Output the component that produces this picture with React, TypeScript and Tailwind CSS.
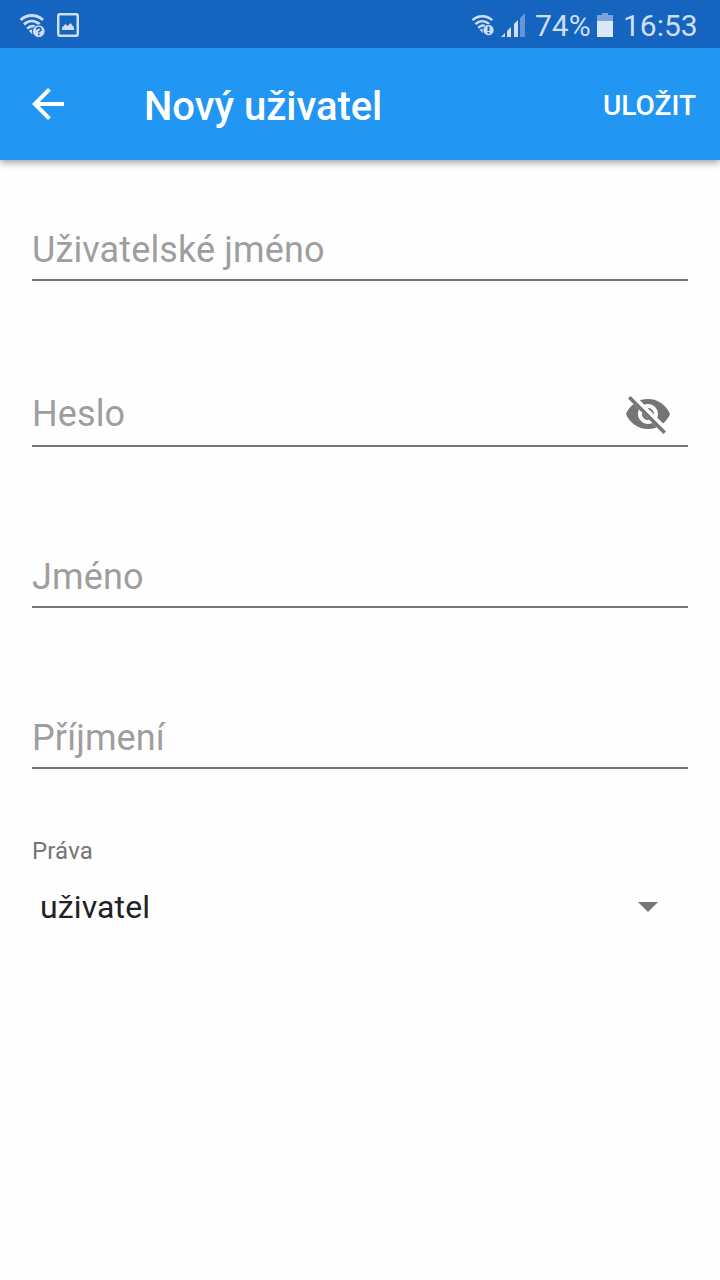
import React from 'react';

function StatusWifi({ mark }: { mark: '?' | '!' }) {
  return (
    <svg width="26" height="26" viewBox="0 0 26 26" fill="none" stroke="#cfdef3">
      <path d="M1.6 7C8 1 17.6 1 24 7" strokeWidth="2.8" />
      <path d="M5 11.4C9.8 7 15.8 7 20.6 11.4" strokeWidth="2.8" />
      <path d="M8.2 15.6C11 12.8 14 12.6 16.4 14" strokeWidth="2.7" />
      <path d="M10 18L13.4 21.4V16.6C11.8 16.4 10.8 17.2 10 18Z" fill="#cfdef3" stroke="none" />
      <circle cx="19.8" cy="18.2" r="6.3" fill="#cfdef3" stroke="#1565c0" strokeWidth="1" />
      {mark === '?' ? (
        <path d="M17.6 16.8C17.6 13.9 22 13.9 22 16.5C22 18.1 19.8 17.9 19.8 19.6M19.8 20.6V22.2" stroke="#1565c0" strokeWidth="1.6" />
      ) : (
        <path d="M19.8 14.2V19.2M19.8 20.4V22.2" stroke="#1565c0" strokeWidth="2.2" />
      )}
    </svg>
  );
}

function StatusBar() {
  return (
    <div className="relative z-10 flex h-12 items-start justify-between bg-[#1565c0] pl-[19px] pr-[22px] text-[#cfdef3]">
      <div className="flex pt-[13px]">
        <StatusWifi mark="?" />
        <svg className="ml-3" width="22" height="24" viewBox="0 0 22 24">
          <rect x="1.25" y="1.25" width="19.5" height="21.5" rx="1.5" fill="none" stroke="#cfdef3" strokeWidth="2.5" />
          <path d="M5 17V14.5L8.5 11L10.5 13L13.5 10L17 14.5V17Z" fill="#cfdef3" />
        </svg>
      </div>
      <div className="flex">
        <div className="mt-[14px] flex h-6 w-6 [&>svg]:h-[23px] [&>svg]:w-[23px]">
          <StatusWifi mark="!" />
        </div>
        <svg className="ml-[6px] mt-[13px]" width="24" height="24" viewBox="0 0 24 24">
          <path d="M0 24L4 20V24ZM6 24V18L10 14V24ZM13 24V11L17 7V24Z" fill="#cfdef3" />
          <path d="M19 24V5L24 0V24Z" fill="#6396d6" />
        </svg>
        <span className="ml-[10px] mt-2 w-[56px] whitespace-nowrap text-[30px] leading-9">74%</span>
        <svg className="ml-[6px] mt-[13px]" width="16" height="24" viewBox="0 0 16 24">
          <path d="M0 2H5V0H11V2H16V8H0Z" fill="#78a5dc" />
          <path d="M0 8H16V24H0Z" fill="#dce9f5" />
        </svg>
        <span className="ml-[10px] mt-2 w-[75px] whitespace-nowrap text-[30px] leading-9">16:53</span>
      </div>
    </div>
  );
}

function VisibilityOff() {
  return (
    <svg width="48" height="48" viewBox="0 0 24 24">
      <defs>
        <mask id="slash">
          <path d="M0 0H24V24H0Z" fill="#fff" />
          <path d="M2 4.27L19.73 22L22.27 19.46L4.54 1.73Z" fill="#000" />
        </mask>
      </defs>
      <path mask="url(#slash)" fill="#757575" fillRule="evenodd" d="M12 4.5C7 4.5 2.73 7.61 1 12c1.73 4.39 6 7.5 11 7.5s9.27-3.11 11-7.5c-1.73-4.39-6-7.5-11-7.5zM12 17c-2.76 0-5-2.24-5-5s2.24-5 5-5 5 2.24 5 5-2.24 5-5 5zM12 9c-1.66 0-3 1.34-3 3s1.34 3 3 3 3-1.34 3-3-1.34-3-3-3z" />
      <path d="M2 4.27L3.27 3L21 20.73L19.73 22Z" fill="#757575" />
    </svg>
  );
}

function Field({ label, className, children }: { label: string; className: string; children?: React.ReactNode }) {
  return (
    <div className={`flex items-end justify-between border-b-2 border-[#757575] text-4xl leading-[42px] tracking-[0.12px] text-[#9e9e9e] ${className}`}>
      <span>{label}</span>
      {children}
    </div>
  );
}

export default function App() {
  return (
    <div className="flex h-[1280px] w-[720px] flex-col overflow-hidden bg-[#fefefe] font-['Roboto',sans-serif]">
      <StatusBar />
      <header className="flex h-28 items-center bg-[#2196f3] pl-6 pr-6 text-white shadow-[0_3px_7px_rgba(0,0,0,0.35)]">
        <svg width="48" height="48" viewBox="0 0 24 24" fill="#fff">
          <path d="M20 11H7.83l5.59-5.59L12 4l-8 8 8 8 1.41-1.41L7.83 13H20v-2z" />
        </svg>
        <h1 className="ml-[72px] mt-[6px] flex-1 text-[40px] font-medium leading-[48px] tracking-[-0.04px]">Nový uživatel</h1>
        <button className="mt-1 text-[28px] font-medium leading-8">ULOŽIT</button>
      </header>
      <main className="flex flex-col px-8">
        <Field label="Uživatelské jméno" className="mt-[61px] h-[60px] pb-2" />
        <Field label="Heslo" className="mt-[106px] h-[60px] pb-[10px]">
          <span className="-mb-[3px] mr-4"><VisibilityOff /></span>
        </Field>
        <Field label="Jméno" className="mt-[101px] h-[60px] pb-2" />
        <Field label="Příjmení" className="mt-[101px] h-[60px] pb-2" />
        <label className="mt-[68px] text-2xl leading-7 tracking-[0.15px] text-[#757575]">Práva</label>
        <div className="mt-[23px] flex h-[38px] items-center justify-between pl-2 pr-[30px] text-[32px] leading-[38px] tracking-[0.12px] text-[#212121]">
          <span>uživatel</span>
          <svg width="20" height="10" viewBox="0 0 20 10"><path d="M0 0H20L10 10Z" fill="#757575" /></svg>
        </div>
      </main>
    </div>
  );
}
